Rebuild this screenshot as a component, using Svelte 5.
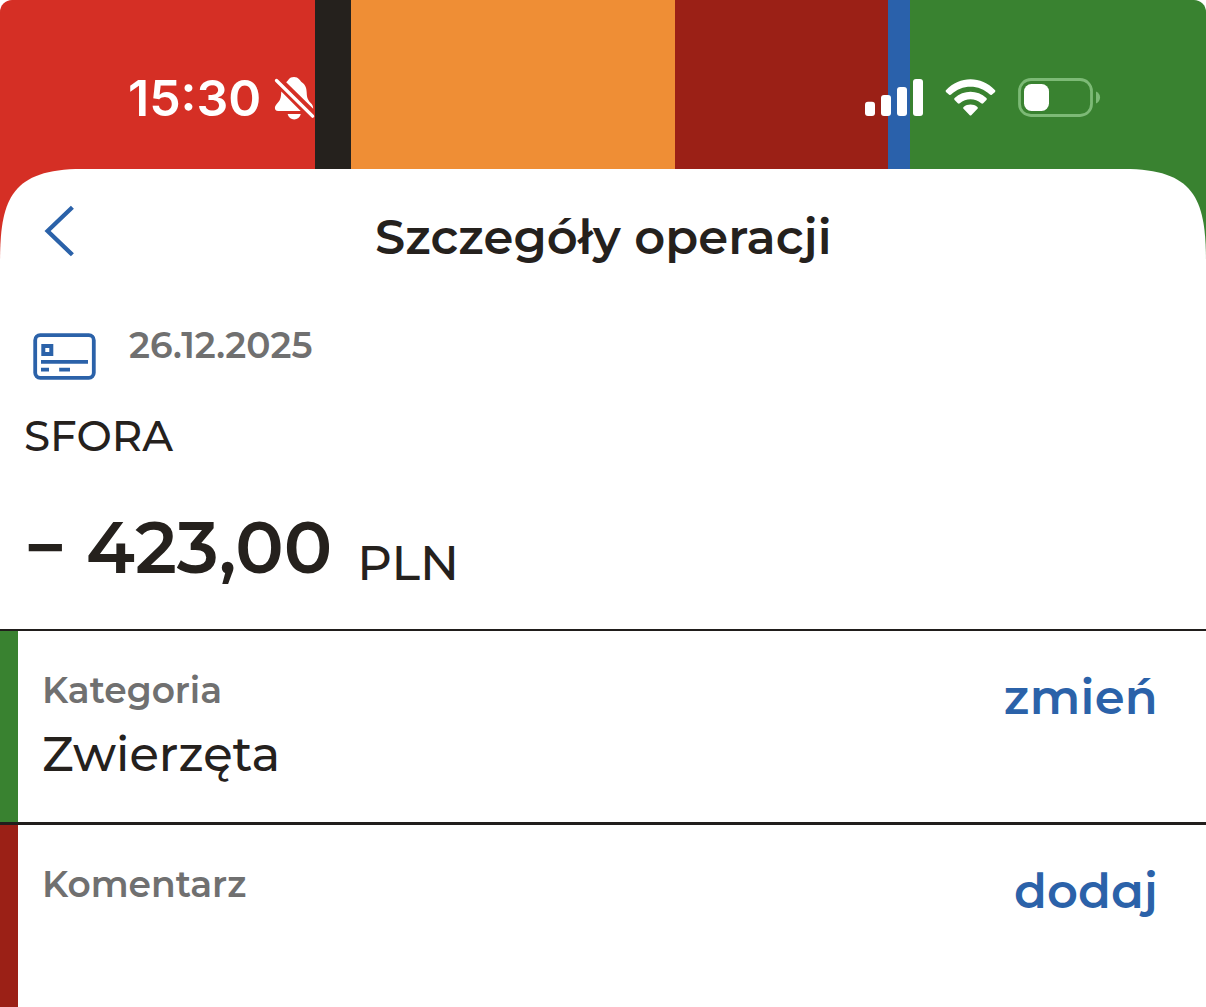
<script>
  const stripes = ['red', 'ink', 'orange', 'maroon', 'blue', 'green'];
</script>

<div class="screen">
  <header class="banner">
    <div class="stripes">
      {#each stripes as s}<i class={s}></i>{/each}
    </div>
    <div class="status">
      <div class="clock">
        <span class="time">15:30</span>
        <svg class="bell" width="42" height="46" viewBox="273 75 42 46">
          <path fill="#fff" d="M286.2 82.2C288.500 80.800 288.800 77 294 77C298.800 77 299.600 80.300 301.800 82.200C305.500 84.800 306.600 88 306.700 92.500C306.800 98.500 308.300 100.300 311 103.200C312.600 105 313.200 106.200 313.200 108.800Z" />
          <path fill="#fff" d="M281.300 91.600L300.700 111H278.200C275.800 111 274.800 109.600 274.900 107.800C275.100 104.600 278.500 102.900 280 99.500C281.200 96.800 281 94.200 281.300 91.600Z" />
          <path fill="#fff" d="M287.600 114H300.800C300 117.400 297.400 119.400 294.200 119.400C291 119.400 288.400 117.400 287.600 114Z" />
          <path stroke="#fff" stroke-width="3.300" stroke-linecap="round" d="M276.500 80.500L312.600 116.200" />
        </svg>
      </div>
      <div class="indicators">
        <svg width="59" height="38" viewBox="865 79 59 38" fill="#fff">
          <rect x="865" y="101.700" width="10" height="14.300" rx="3" />
          <rect x="881" y="95" width="10" height="21" rx="3" />
          <rect x="897" y="87" width="10" height="29" rx="3" />
          <rect x="913" y="79" width="10" height="37" rx="3" />
        </svg>
        <svg class="wifi" width="52" height="38" viewBox="945 79 52 38" fill="#fff">
          <path d="M946.200 89.900C959.500 75.600 981.500 75.600 994.800 89.900Q996 91 994.800 92.200L991.800 94.700Q990.900 95.500 989.900 94.600C979 84 962 84 951.100 94.600Q950.100 95.500 949.200 94.700L946.200 92.200Q945 91 946.200 89.900Z" />
          <path d="M954.600 98C963.600 89.500 977.400 89.500 986.400 98Q987.400 99 986.400 100L983.200 103.200Q982.200 104.100 981.200 103.200C975 98 966 98 959.800 103.200Q958.800 104.100 957.800 103.200L954.600 100Q953.600 99 954.600 98Z" />
          <path d="M963.600 106.900C967.700 103.700 973.300 103.700 977.400 106.900Q978.500 107.800 977.500 108.800L971.500 115Q970.500 116 969.500 115L963.500 108.800Q962.500 107.800 963.600 106.900Z" />
        </svg>
        <svg class="battery" width="84" height="40" viewBox="1017 78 84 40">
          <rect x="1019.500" y="79.500" width="72" height="36" rx="11.500" fill="none" stroke="#7dba76" stroke-width="2.800" />
          <rect x="1024" y="84" width="25" height="27" rx="7.500" fill="#fff" />
          <path fill="#7dba76" d="M1096 91.600C1101.400 93.600 1101.400 101.400 1096 103.400Z" />
        </svg>
      </div>
    </div>
  </header>

  <main class="sheet">
    <div class="titlebar">
      <svg class="back" width="32" height="54" viewBox="43 204 32 54">
        <path fill="none" stroke="#2b62a9" stroke-width="4.300" d="M72.400 207.200L47.600 231L72.400 254.800" />
      </svg>
      <h1>Szczegóły operacji</h1>
    </div>

    <section class="summary">
      <div class="when">
        <svg width="64" height="48" viewBox="33 332 64 48">
          <rect x="35.200" y="335.200" width="58.600" height="42.600" rx="5" fill="none" stroke="#2b62a9" stroke-width="3.800" />
          <rect x="43.300" y="346" width="8" height="8" fill="none" stroke="#2b62a9" stroke-width="4" />
          <path stroke="#2b62a9" stroke-width="3.800" d="M41 361.900H88M41 369.700H49M59.200 369.700H70" />
        </svg>
        <time class="small date">26.12.2025</time>
      </div>
      <p class="merchant">SFORA</p>
      <p class="amount">
        <span class="minus">−</span>
        <span>423,00</span>
        <span class="currency">PLN</span>
      </p>
    </section>

    <section class="row category">
      <i class="edge green"></i>
      <div class="field">
        <div class="small">Kategoria</div>
        <div class="value">Zwierzęta</div>
      </div>
      <button class="change">zmień</button>
    </section>

    <section class="row comment">
      <i class="edge maroon"></i>
      <div class="field">
        <div class="small">Komentarz</div>
      </div>
      <button>dod<span class="round">a</span>j</button>
    </section>
  </main>
</div>

<style>
  :global(body) { margin: 0; background: #fff; }
  .screen {
    width: 1206px;
    height: 1007px;
    overflow: hidden;
    font-family: Montserrat, Inter, sans-serif;
    color: #25211d;
    background: #fff;
  }
  h1, p { margin: 0; }
  svg { display: block; flex: none; }

  .banner { display: grid; height: 265px; border-radius: 12px 12px 0 0; overflow: hidden; }
  .stripes, .status { grid-area: 1 / 1; }
  .stripes { display: grid; grid-template-columns: 315px 35.500px 324.500px 213px 22px 296px; }
  .red { background: #d52f25; }
  .ink { background: #25211d; }
  .orange { background: #ef8e35; }
  .maroon { background: #9b2016; }
  .blue { background: #2a61ab; }
  .green { background: #398230; }
  .status {
    display: flex;
    justify-content: space-between;
    align-items: flex-start;
    padding: 75px 105px 0 128px;
    z-index: 1;
  }
  .clock { display: flex; align-items: center; }
  .time { width: 145px; font: 600 50px/46px Inter, sans-serif; color: #fff; }
  .indicators { display: flex; align-items: center; height: 46px; }
  .wifi { margin-left: 21px; }
  .battery { margin-left: 20px; }

  .sheet {
    position: relative;
    z-index: 2;
    height: 838px;
    margin-top: -96px;
    background: #fff;
    clip-path: path('M0 96C0 34 8 0 82 0H1124C1198 0 1206 34 1206 96V838H0Z');
  }
  .titlebar { display: flex; align-items: flex-start; height: 134px; padding: 35px 0 0 43px; box-sizing: border-box; }
  h1 { padding: 3px 0 0 300px; font-size: 48px; line-height: 60px; font-weight: 600; letter-spacing: .08px; }

  .summary { height: 326px; border-bottom: 2px solid #211e1c; }
  .when { display: flex; height: 104px; padding: 29px 0 0 33px; box-sizing: border-box; }
  .small { font-size: 36px; line-height: 44px; font-weight: 600; color: #707070; }
  .date { margin: -9px 0 0 32px; }
  .merchant { padding: 4px 0 0 24px; font-size: 42px; line-height: 50px; font-weight: 500; }
  .amount { display: flex; padding: 41px 0 0 24px; font-size: 72px; line-height: 90px; font-weight: 600; }
  .minus { width: 62px; }
  .currency { margin: 16px 0 0 25px; font-size: 48px; font-weight: 500; }

  .row { display: flex; align-items: stretch; box-sizing: border-box; }
  .edge { width: 18px; flex: none; }
  .category { height: 194px; border-bottom: 3px solid #211e1c; }
  .comment { height: 182px; }
  .field { flex: 1; padding: 37px 0 0 24px; }
  .value { margin-top: 12px; font-size: 48px; line-height: 60px; font-weight: 500; }
  button {
    align-self: flex-start;
    margin: 36px 48px 0 0;
    padding: 0;
    border: 0;
    background: none;
    font: 600 48px/60px Montserrat, Inter, sans-serif;
    color: #2b62a9;
  }
  .change { letter-spacing: .3px; }
  .round { font-feature-settings: 'ss01'; }
</style>
